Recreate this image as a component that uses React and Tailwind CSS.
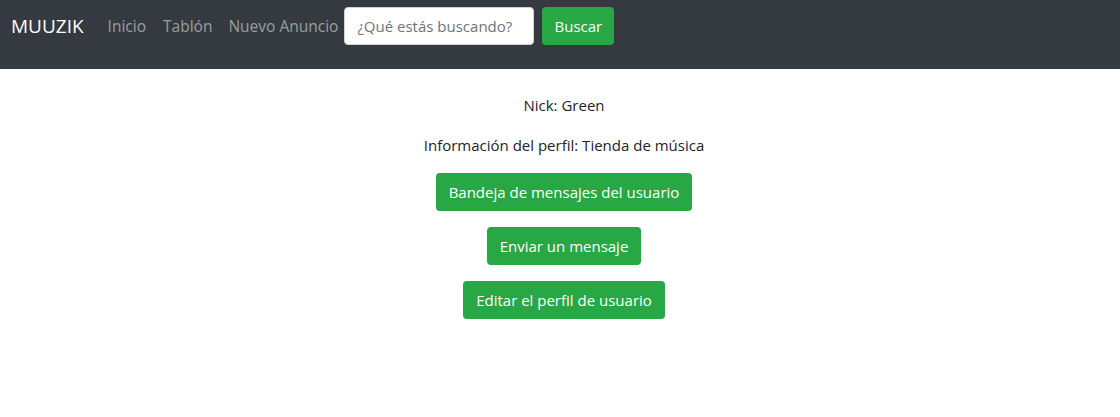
export default function App() {
  return (
    <div className="min-h-[417px] bg-white text-[#212529] text-[15px] leading-6" style={{ fontFamily: '"Open Sans", sans-serif' }}>
      <nav className="h-[69px] bg-[#343a40] flex items-start pt-[7px] pl-[11px]">
        <span className="text-white text-[19px] leading-[30px] mt-[4px] mr-[24px]">MUUZIK</span>
        <div className="flex gap-4 mt-[7px] text-[15.5px] text-[rgba(255,255,255,0.5)] whitespace-nowrap">
          <span className="mr-px">Inicio</span>
          <span>Tablón</span>
          <span>Nuevo Anuncio</span>
        </div>
        <div className="ml-[6px] w-[190px] h-[38px] bg-white border border-[#ced4da] rounded flex items-center px-3 text-[#6c757d] whitespace-nowrap overflow-hidden">¿Qué estás buscando?</div>
        <button className="ml-2 h-[38px] w-[72px] bg-[#28a745] text-white rounded">Buscar</button>
      </nav>
      <div className="flex flex-col items-center pl-2 pt-[24px]">
        <p className="mb-4">Nick: Green</p>
        <p className="mb-4">Información del perfil: Tienda de música</p>
        <div className="flex flex-col items-center gap-4">
          <button className="h-[38px] w-[256px] bg-[#28a745] text-white rounded">Bandeja de mensajes del usuario</button>
          <button className="h-[38px] w-[154px] bg-[#28a745] text-white rounded">Enviar un mensaje</button>
          <button className="h-[38px] w-[202px] bg-[#28a745] text-white rounded">Editar el perfil de usuario</button>
        </div>
      </div>
    </div>
  );
}
